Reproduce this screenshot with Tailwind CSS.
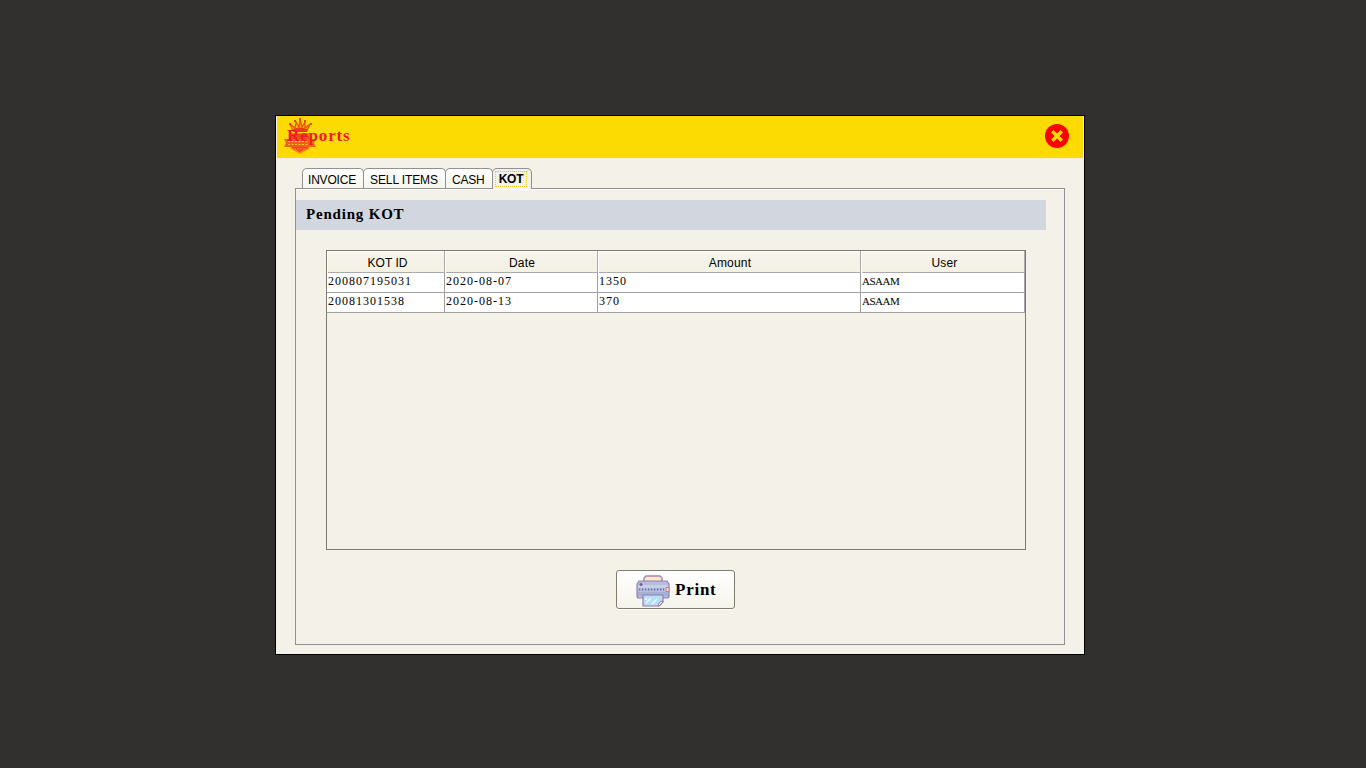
<!DOCTYPE html>
<html lang="en">
<head>
<meta charset="utf-8">
<title>Reports</title>
<script src="https://cdn.jsdelivr.net/npm/@tailwindcss/browser@4"></script>
</head>
<body class="w-[1366px] h-[768px] overflow-hidden bg-[#32302e] pl-[275px] pt-[115px] text-black font-['Liberation_Sans',sans-serif]">
<main class="w-[810px] h-[540px] border border-black bg-[#f4f1e8] flex flex-col">
  <header class="h-[42px] ml-px mr-px shrink-0 bg-[#fcdb02] flex items-center justify-between relative">
    <svg class="absolute left-[6px] top-[1px]" width="34" height="38" viewBox="0 0 34 38" fill="none">
      <path d="M10 14 7 7l5 4 1-6 3 5 1-8 2 8 3-5v6l5-4-3 7Z" fill="#f6b00b" stroke="#ee4a17" stroke-width="1.200"/>
      <circle cx="17" cy="2" r="1.100" fill="#ee2a1d"/><circle cx="12" cy="4" r="1.100" fill="#ee2a1d"/><circle cx="22" cy="4" r="1.100" fill="#ee2a1d"/><circle cx="7" cy="7" r="1.100" fill="#ee2a1d"/><circle cx="28" cy="7" r="1.100" fill="#ee2a1d"/>
      <path d="M10 12q7-3 14 0v3H10Z" fill="#ee3a1d"/>
      <path d="M8 16h18l3 7-3 9-9 5-9-5-3-9Z" fill="#f58a1a"/>
      <path d="M9 17h16l2 6-2 8-8 4-8-4-2-8Z" fill="#f0471f"/>
      <path d="M1 22h32l-2 4 2 4H1l2-4Z" fill="#f0621a"/>
      <path d="M5 24.500h24M5 27.500h24" stroke="#fbc62a" stroke-dasharray="2 1.500"/>
      <path d="M11 32h12" stroke="#f58d20" stroke-dasharray="2 1"/>
    </svg>
    <h1 class="relative pl-[10px] pb-[2px] font-['Liberation_Serif',serif] font-bold text-[17px] leading-[20px] tracking-[0.85px] text-[#ee1c25]">Reports</h1>
    <svg class="mr-[14px] mb-[2px]" width="24" height="24" viewBox="0 0 24 24">
      <circle cx="12" cy="12" r="12" fill="#f00"/>
      <path d="m8.500 8.500 7 7m0-7-7 7" stroke="#fcdb02" stroke-width="3.400" stroke-linecap="square"/>
    </svg>
  </header>
  <nav class="h-[31px] shrink-0 pl-[26px] pt-[10px] flex items-start text-[12px] leading-[22px] relative z-10">
    <div class="w-[62px] h-[20px] border border-b-0 border-[#919191] rounded-t-[5px] bg-linear-to-b from-white to-[#f6f5ed] pl-[5px] tracking-[-0.2px] whitespace-nowrap">INVOICE</div>
    <div class="w-[83px] h-[20px] -ml-px border border-b-0 border-[#919191] rounded-t-[5px] bg-linear-to-b from-white to-[#f6f5ed] pl-[6px] tracking-[-0.1px] whitespace-nowrap">SELL ITEMS</div>
    <div class="w-[48px] h-[20px] -ml-px border border-b-0 border-[#919191] rounded-t-[5px] bg-linear-to-b from-white to-[#f6f5ed] pl-[6px] tracking-[-0.2px] whitespace-nowrap">CASH</div>
    <div class="w-[40px] h-[21px] -ml-px pl-[2px] pt-[2px] border border-b-0 border-[#919191] rounded-t-[5px] bg-[#f4f1e8]"><div class="w-[32px] h-[16px] border border-dotted border-[#f5cf20] text-center font-bold leading-[15px] tracking-[-0.2px]">KOT</div></div>
  </nav>
  <section class="-mt-px ml-[19px] w-[770px] h-[457px] border border-[#919191] shadow-[inset_0_1px_0_#fff]">
    <h2 class="mt-[11px] w-[750px] h-[30px] pl-[10px] bg-[#d2d6df] font-['Liberation_Serif',serif] font-bold text-[15px] leading-[28px] tracking-[0.8px]">Pending KOT</h2>
    <div class="mt-[20px] ml-[30px] w-[700px] h-[300px] border border-[#7f7b6d]">
      <div class="grid grid-cols-[118px_153px_263px_164px] w-[698px] h-[22px] border-b border-[#aaa] text-[12px] leading-[24px] text-center bg-linear-to-b from-[#f7f5ed] to-[#f3f1e4] tracking-[0.2px]">
        <div class="border-r border-[#aaa] shadow-[inset_1px_1px_0_#fff] pl-[4px] tracking-[0px]">KOT ID</div>
        <div class="border-r border-[#aaa] shadow-[inset_1px_1px_0_#fff] pl-[2px]">Date</div>
        <div class="border-r border-[#aaa] shadow-[inset_1px_1px_0_#fff] pl-[2px]">Amount</div>
        <div class="border-r border-[#aaa] shadow-[inset_1px_1px_0_#fff] pl-[4px]">User</div>
      </div>
      <div class="grid grid-cols-[118px_153px_263px_164px] w-[698px] h-[20px] border-b border-[#a0a0a0] text-[12px] leading-[17px] bg-white font-['Liberation_Serif',serif] tracking-[1px]">
        <div class="pl-px border-r border-[#a0a0a0]">200807195031</div>
        <div class="pl-px border-r border-[#a0a0a0]">2020-08-07</div>
        <div class="pl-px border-r border-[#a0a0a0]">1350</div>
        <div class="pl-px border-r border-[#a0a0a0] text-[11px] tracking-[-0.5px]">ASAAM</div>
      </div>
      <div class="grid grid-cols-[118px_153px_263px_164px] w-[698px] h-[20px] border-b border-[#a0a0a0] text-[12px] leading-[17px] bg-white font-['Liberation_Serif',serif] tracking-[1px]">
        <div class="pl-px border-r border-[#a0a0a0]">20081301538</div>
        <div class="pl-px border-r border-[#a0a0a0]">2020-08-13</div>
        <div class="pl-px border-r border-[#a0a0a0]">370</div>
        <div class="pl-px border-r border-[#a0a0a0] text-[11px] tracking-[-0.5px]">ASAAM</div>
      </div>
    </div>
    <button class="mt-[20px] ml-[320px] w-[119px] h-[39px] border border-[#7f7b6d] rounded-[3px] bg-linear-to-b from-white to-[#f5f4eb] shadow-[0_1px_0_#fff] flex items-center pl-[19px] gap-[5px] font-['Liberation_Serif',serif] font-bold text-[17px] leading-[20px]">
      <svg class="mt-[2px]" width="34" height="32" viewBox="0 0 34 32" stroke-linejoin="round">
        <path d="M8 8V3l2-2h14l2 2v5Z" fill="#fbe8cd" stroke="#a982b2" stroke-width="1.400"/>
        <path d="M3 6h28l2 3v12q0 2-2 2H3q-2 0-2-2V9Z" fill="#b4bfdf" stroke="#987cae" stroke-width="1.200"/>
        <path d="M2 10h30v3H2Z" fill="#c7cfe9"/>
        <path d="M2 17h30v4H2Z" fill="#a6b0d4"/>
        <circle cx="5" cy="9.500" r="1.500" fill="#80598c"/>
        <path d="M3 14.500h25" stroke="#75679f" stroke-width="1.800" stroke-dasharray="1.300 1.700"/>
        <path d="M30 12.500h3v4h-3Z" fill="#fbe5ae" stroke="#bb7b9b"/>
        <path d="M7 20h20v7l-4 4H7Z" fill="#b5dff9" stroke="#987cae" stroke-width="1.200"/>
        <path d="m10 28 5-5m1 6 5-5M10 23v2m-1-1h2" stroke="#f2fbff" stroke-width="1.200" fill="none"/>
        <path d="M22 31q1-5 5-5v1l-4 4Z" fill="#fbe8cd" stroke="#987cae"/>
      </svg>
      <span class="mt-px tracking-[0.75px]">Print</span>
    </button>
  </section>
</main>
</body>
</html>
